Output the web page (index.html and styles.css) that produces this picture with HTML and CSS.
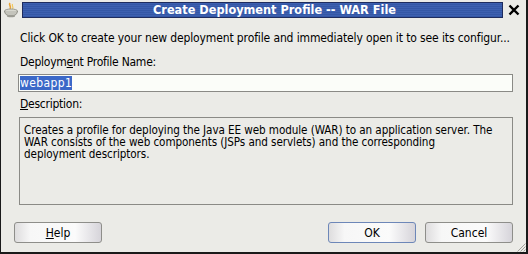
FILE: index.html
```html
<!DOCTYPE html>
<html>
<head>
<meta charset="utf-8">
<link rel="stylesheet" href="styles.css">
</head>
<body>
<div class="window">
  <div class="titlebar">
    <div class="app-icon">
      <svg width="16" height="16" viewBox="0 0 16 16">
        <path d="M7 1 C5 3 9 4 7 7" stroke="#e9a233" stroke-width="1.6" fill="none"/>
        <path d="M9.5 2 C8.5 4 11 5 9.5 7" stroke="#f2c85a" stroke-width="1.2" fill="none"/>
        <ellipse cx="8" cy="9" rx="6.5" ry="2" fill="#d8d8d0" stroke="#8a8a80" stroke-width="0.8"/>
        <path d="M1.5 9 Q2 14 8 14 Q14 14 14.5 9" fill="#c4c4bc" stroke="#7d7d75" stroke-width="0.8"/>
        <ellipse cx="8" cy="14.2" rx="4" ry="1" fill="#9a9a92"/>
      </svg>
    </div>
    <div class="title">Create Deployment Profile -- WAR File</div>
    <div class="close">
      <svg width="12" height="12" viewBox="0 0 12 12">
        <path d="M1.5 1.5 L10.5 10.5 M10.5 1.5 L1.5 10.5" stroke="#000" stroke-width="2.4"/>
      </svg>
    </div>
  </div>
  <div class="content">
    <p class="intro">Click OK to create your new deployment profile and immediately open it to see its configur...</p>
    <label class="label">Deploym<u>e</u>nt Profile Name:</label>
    <div class="input"><span class="sel">webapp1</span></div>
    <label class="label desc-label"><u>D</u>escription:</label>
    <div class="desc">Creates a profile for deploying the Java EE web module (WAR) to an application server. The<br>WAR consists of the web components (JSPs and servlets) and the corresponding<br>deployment descriptors.</div>
    <div class="buttons">
      <button class="btn"><u>H</u>elp</button>
      <div class="spacer"></div>
      <button class="btn default">OK</button>
      <button class="btn">Cancel</button>
    </div>
  </div>
  <div class="grip">
    <svg width="10" height="10" viewBox="0 0 10 10">
      <path d="M9.5 1.5 L1.5 9.5 M9.5 4.5 L4.5 9.5 M9.5 7.5 L7.5 9.5" stroke="#a2a29c" stroke-width="1"/>
    </svg>
  </div>
</div>
</body>
</html>
```

FILE: styles.css
```css
html, body {
  margin: 0;
  padding: 0;
  width: 528px;
  height: 254px;
  overflow: hidden;
  background: #ebebe7;
}
.window {
  position: relative;
  box-sizing: border-box;
  width: 528px;
  height: 254px;
  background: #ebebe7;
  border-left: 1px solid #1a1a1a;
  border-right: 2px solid #1a1a1a;
  border-bottom: 2px solid #1a1a1a;
  font-family: "DejaVu Sans Condensed", "DejaVu Sans", sans-serif;
  font-stretch: condensed;
  font-size: 12px;
  color: #000;
}
.titlebar {
  display: flex;
  align-items: center;
  height: 20px;
  padding: 0 4px 0 2px;
  gap: 3px;
}
.app-icon {
  width: 16px;
  height: 16px;
  display: flex;
}
.title {
  flex: 1;
  height: 16px;
  box-sizing: border-box;
  border: 1px solid #1e2c5e;
  background: repeating-linear-gradient(to bottom, #3d60b0 0px, #3d60b0 1px, #3457a6 1px, #3457a6 2px);
  color: #fff;
  font-weight: bold;
  font-size: 12.6px;
  line-height: 14px;
  text-align: center;
  padding-left: 24px;
}
.close {
  width: 16px;
  height: 16px;
  display: flex;
  align-items: center;
  justify-content: center;
}
.content {
  padding: 10px 13px 0 17px;
  display: flex;
  flex-direction: column;
}
.intro {
  margin: 0;
  line-height: 16px;
  height: 16px;
  padding-left: 2px;
  white-space: nowrap;
  letter-spacing: -0.12px;
}
.label {
  display: block;
  margin-top: 8px;
  line-height: 16px;
  padding-left: 2px;
  letter-spacing: -0.25px;
}
.input {
  margin-top: 4px;
  height: 18px;
  box-sizing: border-box;
  border: 1px solid #8a8a86;
  background: #fbfdf9;
  padding: 0 1px;
  line-height: 16px;
}
.sel {
  background: #3b68c8;
  color: #fff;
  letter-spacing: 0.4px;
}
.desc-label {
  margin-top: 4px;
}
.desc {
  margin-top: 5px;
  margin-left: 1px;
  height: 88px;
  box-sizing: border-box;
  border: 1px solid #8a8a86;
  padding: 6px 4px;
  line-height: 12px;
  font-size: 11.6px;
  letter-spacing: -0.08px;
  white-space: nowrap;
}
.buttons {
  display: flex;
  margin-top: 17px;
  margin-left: -4px;
  gap: 9px;
}
.spacer {
  flex: 1;
}
.btn {
  width: 88px;
  height: 21px;
  box-sizing: border-box;
  border: 1px solid #8e8e8a;
  border-radius: 3px;
  background: linear-gradient(to right, #deddde 0%, #f7f7f7 18%, #fbfbfb 70%, #d6d4da 100%);
  font-family: "DejaVu Sans Condensed", "DejaVu Sans", sans-serif;
  font-stretch: condensed;
  font-size: 12px;
  color: #000;
  padding: 0;
}
.btn.default {
  border-color: #6d87b8;
}
.grip {
  position: absolute;
  right: 0;
  bottom: 0;
  width: 10px;
  height: 10px;
  display: flex;
}
```
